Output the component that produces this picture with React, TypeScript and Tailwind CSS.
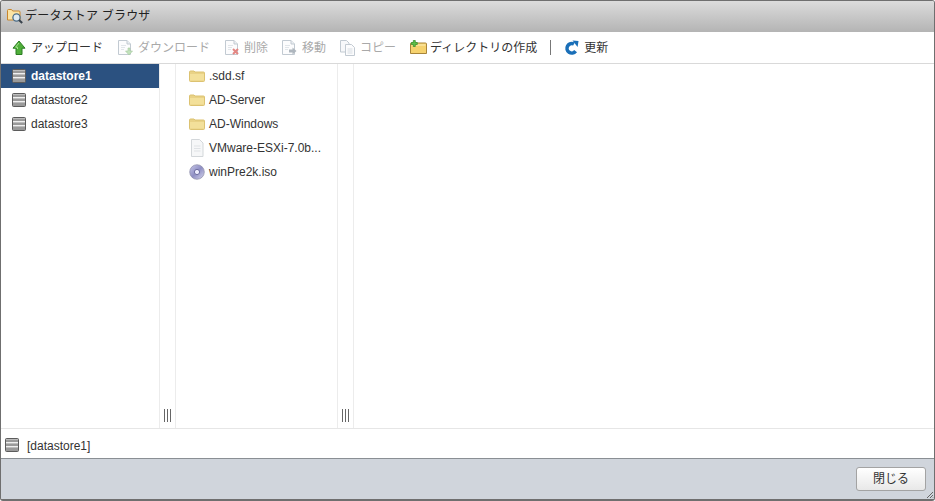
import type { ReactNode } from "react";

function FolderSearchIcon() {
  return (
    <svg width="18" height="18" viewBox="0 0 18 18" className="shrink-0">
      <path d="M1.500 13V3.500q0-1 1-1h3l1.200 1.500h6.300q1 0 1 1V13z" fill="#fbe3a4" stroke="#c8862c" />
      <circle cx="10.500" cy="10.500" r="3.600" fill="#dfeaf2" stroke="#4d6f8a" strokeWidth="1.300" />
      <path d="M13 13l3.200 3" stroke="#38424c" strokeWidth="2" />
    </svg>
  );
}

function UploadIcon() {
  return (
    <svg width="14" height="16" viewBox="0 0 14 16" className="shrink-0">
      <path d="M7 1l6 7.200H10v6.300H4V8.200H1z" fill="#4fae3a" stroke="#2b7d22" strokeLinejoin="round" />
      <path d="M7 3L3.600 7.200h1.900V9" fill="none" stroke="#a6e58e" />
    </svg>
  );
}

function PageIcon({ badge }: { badge: ReactNode }) {
  return (
    <svg width="18" height="18" viewBox="0 0 18 18" className="shrink-0 opacity-70">
      <path d="M1.500 1.500h8.500l3.500 3.500v10.500h-12z" fill="#fbfcfd" stroke="#a9b4bf" />
      <path d="M10 1.500V5h3.500" fill="#e4e9ee" stroke="#a9b4bf" />
      <path d="M4 6.500h5M4 8.500h4M4 10.500h3" stroke="#d5dbe1" />
      {badge}
    </svg>
  );
}

function CopyIcon() {
  return (
    <svg width="18" height="18" viewBox="0 0 18 18" className="shrink-0 opacity-70">
      <path d="M1.500 1.500h6l2.500 2.500v9h-8.500z" fill="#f4f6f8" stroke="#a9b4bf" />
      <path d="M6.500 5.500h6l3 3v8h-9z" fill="#fbfcfd" stroke="#a9b4bf" />
      <path d="M8.500 10h5M8.500 12h5M8.500 14h5" stroke="#c5ced6" />
    </svg>
  );
}

function NewFolderIcon() {
  return (
    <svg width="17" height="15" viewBox="0 0 17 15" className="shrink-0">
      <path d="M.5 13.500V4q0-1 1-1h14q1 0 1 1v9.500z" fill="#f6d26e" stroke="#a8853a" />
      <path d="M1.500 5h14" stroke="#fdeeb8" />
      <path d="M3.300.5h2v2h2v2h-2v2h-2v-2h-2v-2h2z" fill="#5fc04a" stroke="#2f8a25" strokeWidth=".7" />
    </svg>
  );
}

function RefreshIcon() {
  return (
    <svg width="16" height="16" viewBox="0 0 16 16" className="shrink-0">
      <path d="M11.600 11.200A4.800 4.800 0 1 1 10 4" fill="none" stroke="#1a6fb8" strokeWidth="3.600" />
      <path d="M8.500.6l6 .4-.9 6z" fill="#1a6fb8" />
    </svg>
  );
}

function DatastoreIcon() {
  return (
    <svg width="14" height="14" viewBox="0 0 14 14" className="shrink-0">
      <rect x=".5" y=".5" width="13" height="13" rx="1" fill="#9a9a9a" stroke="#5c5c5c" />
      <path d="M1 1.500h12M1 5.500h12M1 9.500h12" stroke="#bcbcbc" />
      <path d="M1 4.500h12M1 8.500h12" stroke="#f0f0f0" />
    </svg>
  );
}

function FolderIcon() {
  return (
    <svg width="16" height="12" viewBox="0 0 16 12" className="shrink-0">
      <path d="M.5 10.500V2q0-1 1-1h3.500l1 1h8.500q1 0 1 1v7.500q0 1-1 1H1.500q-1 0-1-1z" fill="#e9d286" stroke="#dcc271" />
      <path d="M1 4h14v6.500H1z" fill="#f3e09a" />
    </svg>
  );
}

function FileIcon() {
  return (
    <svg width="16" height="18" viewBox="0 0 16 18" className="shrink-0">
      <path d="M2.500.5h8l3.500 3.500v13.500h-11.500z" fill="#f6f7f8" stroke="#d3d7da" />
      <path d="M5 7h6.500M5 9.500h6.500M5 12h6.500" stroke="#dfe2e5" />
    </svg>
  );
}

function DiscIcon() {
  return (
    <svg width="16" height="16" viewBox="0 0 16 16" className="shrink-0">
      <defs>
        <linearGradient id="disc" x1="0" y1="0" x2="1" y2="1">
          <stop offset="0" stopColor="#c9c9ea" />
          <stop offset=".5" stopColor="#8f8fc4" />
          <stop offset="1" stopColor="#d8d8ee" />
        </linearGradient>
      </defs>
      <circle cx="8" cy="8" r="7.300" fill="url(#disc)" stroke="#8d8da8" strokeWidth=".7" />
      <circle cx="8" cy="8" r="2.600" fill="#eef" stroke="#6d6da0" />
    </svg>
  );
}

function Resizer() {
  return (
    <div className="flex w-[17px] shrink-0 flex-col items-center justify-end border-x border-[#ececec] pb-[6px]">
      <div className="flex h-[13px] gap-[2px]">
        <span className="w-px bg-[#666]" />
        <span className="w-px bg-[#666]" />
        <span className="w-px bg-[#666]" />
      </div>
    </div>
  );
}

function ToolButton({ icon, label, disabled, className }: { icon: ReactNode; label: string; disabled?: boolean; className?: string }) {
  return (
    <div className={`flex items-center ${disabled ? "text-[#a9a9a9]" : "text-[#333]"} ${className ?? ""}`}>
      {icon}
      <span className="pt-px">{label}</span>
    </div>
  );
}

const datastores = ["datastore1", "datastore2", "datastore3"];

const files = [
  { name: ".sdd.sf", icon: <FolderIcon /> },
  { name: "AD-Server", icon: <FolderIcon /> },
  { name: "AD-Windows", icon: <FolderIcon /> },
  { name: "VMware-ESXi-7.0b...", icon: <FileIcon /> },
  { name: "winPre2k.iso", icon: <DiscIcon /> },
];

export default function App() {
  return (
    <div className="flex h-[501px] w-[935px] flex-col overflow-hidden rounded-[3px] border border-b-2 border-[#6f6f6f] bg-white font-['Liberation_Sans','Noto_Sans_CJK_JP',sans-serif] text-xs text-[#333]">
      <div className="flex h-[31px] shrink-0 items-center gap-[1px] bg-gradient-to-b from-[#dcdcdc] to-[#b4b4b4] pb-[2px] pl-[5px] tracking-[0.2px] text-[#222]">
        <FolderSearchIcon />
        <span>データストア ブラウザ</span>
      </div>

      <div className="flex h-8 shrink-0 items-center border-b border-[#d9d9d9] pl-[11px]">
        <ToolButton icon={<UploadIcon />} label="アップロード" className="mr-[14px] gap-[5px]" />
        <ToolButton
          disabled
          label="ダウンロード"
          className="mr-[14px] gap-[3px]"
          icon={<PageIcon badge={<path d="M11 9v3H8.500l3.500 4 3.500-4H13V9z" fill="#a9d6a0" stroke="#7fb477" strokeWidth=".6" />} />}
        />
        <ToolButton
          disabled
          label="削除"
          className="mr-[13px] gap-[2px]"
          icon={<PageIcon badge={<path d="M9 10l5 5M14 10l-5 5" stroke="#d9534f" strokeWidth="2" />} />}
        />
        <ToolButton
          disabled
          label="移動"
          className="mr-[13px] gap-[3px]"
          icon={<PageIcon badge={<path d="M8 10.500h3.500V8.500l4 3.500-4 3.500v-2H8z" fill="#8d98a3" />} />}
        />
        <ToolButton disabled icon={<CopyIcon />} label="コピー" className="mr-[14px] gap-[3px]" />
        <ToolButton icon={<NewFolderIcon />} label="ディレクトリの作成" className="gap-[3px]" />
        <div className="mx-[13px] h-[15px] w-px bg-[#777]" />
        <ToolButton icon={<RefreshIcon />} label="更新" className="gap-1" />
      </div>

      <div className="flex min-h-0 flex-1 border-b border-[#e6e6e6]">
        <div className="w-[158px] shrink-0">
          {datastores.map((name, i) => (
            <div
              key={name}
              className={`flex h-6 items-center gap-[5px] pl-[11px] ${i === 0 ? "bg-[#2b5180] font-bold text-white" : ""}`}
            >
              <DatastoreIcon />
              <span>{name}</span>
            </div>
          ))}
        </div>
        <Resizer />
        <div className="w-[161px] shrink-0">
          {files.map((file) => (
            <div key={file.name} className="flex h-6 items-center">
              <div className="flex w-[33px] shrink-0 justify-end pr-[4px]">{file.icon}</div>
              <span>{file.name}</span>
            </div>
          ))}
        </div>
        <Resizer />
        <div className="flex-1" />
      </div>

      <div className="flex h-[29px] shrink-0 items-center gap-2 pl-1 pt-[3px]">
        <DatastoreIcon />
        <span className="pt-px">[datastore1]</span>
      </div>

      <div className="relative flex h-[41px] shrink-0 items-center justify-end border-t border-[#8a8f94] bg-[#d0d5dc] pr-[8px]">
        <button className="h-6 w-[70px] rounded-[3px] border border-[#a3a3a3] bg-gradient-to-b from-white to-[#e8e8e8] text-[#333]">
          閉じる
        </button>
        <svg width="8" height="8" viewBox="0 0 8 8" className="absolute right-0 bottom-0">
          <path d="M7 1L1 7M7 4L4 7M7 6.500L6.500 7" stroke="#666" />
        </svg>
      </div>
    </div>
  );
}
